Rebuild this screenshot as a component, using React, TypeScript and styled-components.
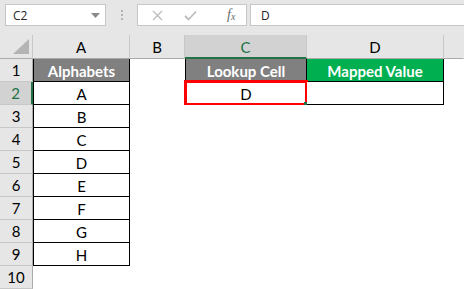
import React from "react";
import styled, { createGlobalStyle } from "styled-components";

const GlobalStyle = createGlobalStyle`
  html, body {
    margin: 0;
    padding: 0;
    background: #ffffff;
    overflow: hidden;
  }
`;

const Page = styled.div`
  width: 464px;
  height: 289px;
  display: flex;
  flex-direction: column;
  font-family: Lato, "Liberation Sans", sans-serif;
`;

/* formula bar */

const Toolbar = styled.div`
  height: 35px;
  box-sizing: border-box;
  background: #e6e6e6;
  display: flex;
  align-items: flex-start;
  padding: 4px 0 0 5px;
`;

const NameBox = styled.div`
  width: 101px;
  height: 22px;
  box-sizing: border-box;
  background: #ffffff;
  border: 1px solid #c6c6c6;
  display: flex;
  align-items: center;
  justify-content: space-between;
  padding: 0 5px 0 7px;
  font-family: "Open Sans", "Liberation Sans", sans-serif;
  font-size: 12px;
  color: #262626;
`;

const Grip = styled.div`
  width: 31px;
  height: 22px;
  display: flex;
  flex-direction: column;
  align-items: center;
  justify-content: center;
  gap: 2px;

  span {
    width: 2px;
    height: 2px;
    background: #b4b4b4;
  }
`;

const FxBox = styled.div`
  width: 110px;
  height: 22px;
  box-sizing: border-box;
  background: #ffffff;
  border: 1px solid #c6c6c6;
  display: flex;
  align-items: center;
  padding-left: 14px;
  gap: 21px;
`;

const FxLabel = styled.span`
  font-family: "Liberation Serif", serif;
  font-style: italic;
  font-size: 14px;
  color: #6b6b6b;
  margin-left: 9px;

  sub {
    font-size: 10px;
    vertical-align: -1px;
  }
`;

const FormulaInput = styled.div`
  flex: 1;
  height: 22px;
  box-sizing: border-box;
  margin-left: 3px;
  background: #ffffff;
  border: 1px solid #c6c6c6;
  border-right: none;
  display: flex;
  align-items: center;
  padding-left: 10px;
  font-family: "Open Sans", "Liberation Sans", sans-serif;
  font-size: 12px;
  color: #262626;
`;

/* sheet grid */

const Sheet = styled.div`
  flex: 1;
  display: grid;
  grid-template-columns: 33px 97px 55px 122px 137px 1fr;
  grid-template-rows: 24px repeat(10, 23px);
  background: #ffffff;
`;

const Corner = styled.div`
  background: #e6e6e6;
  border-right: 1px solid #c8c8c8;
  border-bottom: 1px solid #ababab;
  box-sizing: border-box;
  display: flex;
  align-items: flex-end;
  justify-content: flex-end;
  padding: 0 3px 4px 0;
`;

const ColHead = styled.div<{ $active?: boolean; $last?: boolean }>`
  box-sizing: border-box;
  background: ${(p) => (p.$active ? "#d2d2d2" : "#e6e6e6")};
  border-right: 1px solid ${(p) => (p.$last ? "transparent" : "#c8c8c8")};
  border-bottom: ${(p) => (p.$active ? "2px solid #217346" : "1px solid #ababab")};
  color: ${(p) => (p.$active ? "#217346" : "#000000")};
  font-size: 15px;
  display: flex;
  align-items: center;
  justify-content: center;
  padding-top: ${(p) => (p.$active ? "1px" : "0")};
`;

const RowHead = styled.div<{ $active?: boolean }>`
  box-sizing: border-box;
  background: ${(p) => (p.$active ? "#d2d2d2" : "#e6e6e6")};
  border-right: ${(p) => (p.$active ? "2px solid #217346" : "1px solid #ababab")};
  border-bottom: 1px solid #c8c8c8;
  color: ${(p) => (p.$active ? "#217346" : "#000000")};
  font-size: 15px;
  display: flex;
  align-items: center;
  justify-content: center;
`;

type Tone = "plain" | "gray" | "green";

const fills: Record<Tone, string> = {
  plain: "#ffffff",
  gray: "#808080",
  green: "#00b050",
};

const Cell = styled.div<{ $tone?: Tone; $boxed?: boolean; $left?: boolean }>`
  position: relative;
  box-sizing: border-box;
  background: ${(p) => fills[p.$tone || "plain"]};
  color: ${(p) => (p.$tone && p.$tone !== "plain" ? "#ffffff" : "#000000")};
  font-weight: ${(p) => (p.$tone && p.$tone !== "plain" ? 700 : 400)};
  font-size: 15px;
  display: flex;
  align-items: center;
  justify-content: center;
  padding-top: 1px;
  border-right: ${(p) => (p.$boxed ? "1px solid #000000" : "none")};
  border-bottom: ${(p) => (p.$boxed ? "1px solid #000000" : "none")};
  border-left: ${(p) => (p.$left ? "1px solid #000000" : "none")};
`;

const Selection = styled.div`
  position: absolute;
  left: -2px;
  top: -2px;
  right: -2px;
  bottom: -2px;
  border: 3px solid #ff0000;
  pointer-events: none;

  &::after {
    content: "";
    position: absolute;
    right: -2px;
    bottom: -2px;
    width: 3px;
    height: 3px;
    background: #217346;
  }
`;

const CornerMark = () => (
  <svg width="16" height="15" viewBox="0 0 16 15">
    <polygon points="16,0 16,15 0,15" fill="#b4b4b4" />
  </svg>
);

const letters = ["A", "B", "C", "D", "E", "F", "G", "H"];

const App: React.FC = () => {
  const rows = Array.from({ length: 10 }, (_, i) => i + 1);

  return (
    <Page>
      <GlobalStyle />
      <Toolbar>
        <NameBox>
          <span>C2</span>
          <svg width="9" height="5" viewBox="0 0 9 5">
            <polygon points="0,0 9,0 4.5,5" fill="#8a8a8a" />
          </svg>
        </NameBox>
        <Grip>
          <span />
          <span />
          <span />
        </Grip>
        <FxBox>
          <svg width="11" height="11" viewBox="0 0 11 11">
            <path d="M1 1 L10 10 M10 1 L1 10" stroke="#bdbdbd" strokeWidth="1.4" fill="none" />
          </svg>
          <svg width="13" height="11" viewBox="0 0 13 11">
            <path d="M1 6 L4.5 9.5 L12 1.5" stroke="#bdbdbd" strokeWidth="1.8" fill="none" />
          </svg>
          <FxLabel>
            f<sub>x</sub>
          </FxLabel>
        </FxBox>
        <FormulaInput>D</FormulaInput>
      </Toolbar>

      <Sheet>
        <Corner>
          <CornerMark />
        </Corner>
        <ColHead>A</ColHead>
        <ColHead>B</ColHead>
        <ColHead $active>C</ColHead>
        <ColHead>D</ColHead>
        <ColHead $last />

        {rows.map((r) => {
          const inList = r <= 9;
          const label = r === 1 ? "Alphabets" : inList ? letters[r - 2] : "";
          return (
            <React.Fragment key={r}>
              <RowHead $active={r === 2}>{r}</RowHead>
              <Cell $boxed={inList} $left={inList} $tone={r === 1 ? "gray" : "plain"}>
                {label}
              </Cell>
              <Cell />
              {r === 1 && (
                <>
                  <Cell $boxed $left $tone="gray">Lookup Cell</Cell>
                  <Cell $boxed $tone="green">Mapped Value</Cell>
                </>
              )}
              {r === 2 && (
                <>
                  <Cell $boxed $left>
                    D
                    <Selection />
                  </Cell>
                  <Cell $boxed />
                </>
              )}
              {r > 2 && (
                <>
                  <Cell />
                  <Cell />
                </>
              )}
              <Cell />
            </React.Fragment>
          );
        })}
      </Sheet>
    </Page>
  );
};

export default App;
